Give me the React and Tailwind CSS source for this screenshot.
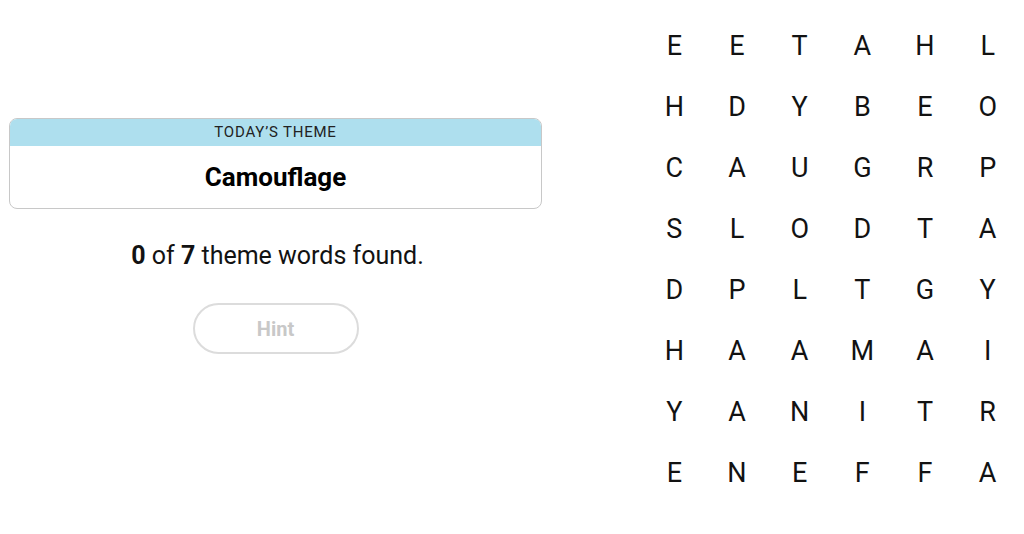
import React from "react";

const rows = [
  "EETAHL",
  "HDYBEO",
  "CAUGRP",
  "SLODTA",
  "DPLTGY",
  "HAAMAI",
  "YANITR",
  "ENEFFA",
];

export default function App() {
  return (
    <div className="w-[1024px] h-[534px] bg-white flex overflow-hidden" style={{ fontFamily: "Roboto, 'Liberation Sans', sans-serif" }}>
      <div className="w-[552px] pt-[118px] pl-[9px] pr-[10px] flex flex-col items-center">
        <div className="w-full rounded-[8px] border border-[#c8c8c8] overflow-hidden">
          <div className="h-[27px] bg-[#aedfee] flex items-center justify-center text-[15px] tracking-[0.8px] text-[#222]">
            TODAY’S THEME
          </div>
          <div className="h-[62px] flex items-center justify-center text-[26px] font-bold text-black">
            Camouflage
          </div>
        </div>
        <div className="mt-[29px] text-[25px] text-[#121212] leading-[35px] pl-[4px]">
          <span className="font-bold">0</span> of <span className="font-bold">7</span> theme words found.
        </div>
        <button className="mt-[30px] w-[166px] h-[51px] rounded-full border-2 border-[#dcdcdc] text-[#c8c8c8] font-bold text-[20px] flex items-center justify-center">
          Hint
        </button>
      </div>
      <div className="ml-[91px] pt-[16px] grid grid-cols-6 w-[376px] h-fit">
        {rows.flatMap((r, i) =>
          r.split("").map((c, j) => (
            <div key={`${i}-${j}`} className="h-[61px] flex items-center justify-center text-[27px] text-[#121212]">
              {c}
            </div>
          ))
        )}
      </div>
    </div>
  );
}
